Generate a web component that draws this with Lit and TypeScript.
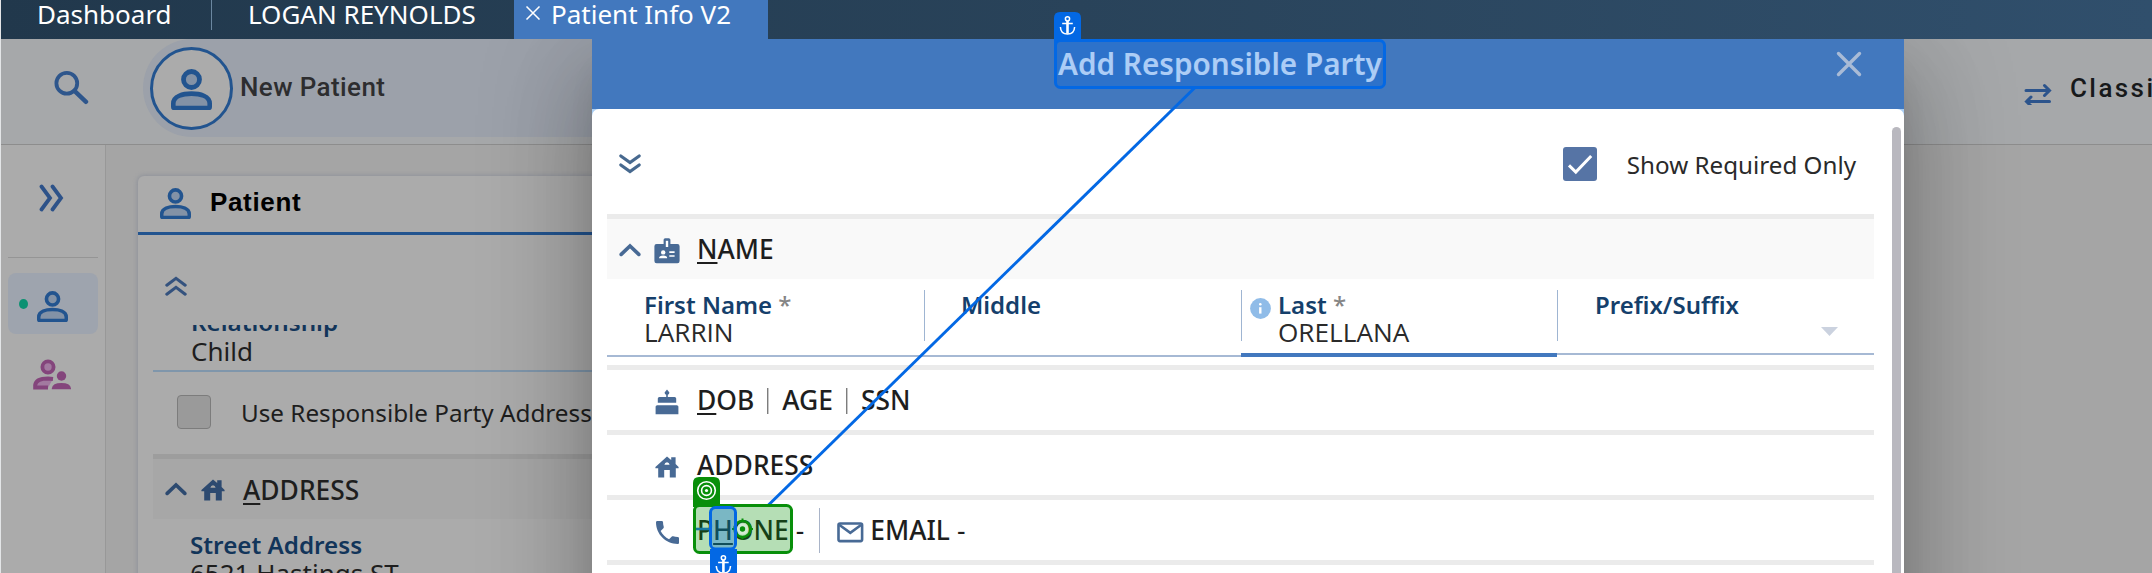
import { LitElement, html, svg, css, type TemplateResult } from "lit";
import { customElement, property } from "lit/decorators.js";
import { classMap } from "lit/directives/class-map.js";

const person = html`<svg viewBox="0 0 41 41" width="100%" height="100%">
  <path d="M2.3 38 V34.5 C2.3 27 12 24.6 20.5 24.6 S38.7 27 38.7 34.5 V38 Q38.7 39 37.5 39 H3.5 Q2.3 39 2.3 38Z" fill="#8392a6" stroke="currentColor" stroke-width="4.6"/>
  <circle cx="20.5" cy="10.5" r="8" fill="#8392a6" stroke="currentColor" stroke-width="4.8"/>
</svg>`;

const house = html`<svg viewBox="0 0 24 22" width="24" height="22" fill="currentColor">
  <path fill-rule="evenodd" d="M12 .5 L16.2 4 V1.2 H20.6 V8 L23.6 11 V12.3 H20.8 V21.5 H14.8 V14 H9.2 V21.5 H3.2 V12.3 H.4 V11Z M9.4 8.8 H14.6 Q14.2 6.3 12 6.3 T9.4 8.8Z"/>
</svg>`;

const chevronUp = html`<svg viewBox="0 0 22 14" width="22" height="14" fill="none" stroke="currentColor" stroke-width="3.6" stroke-linecap="round" stroke-linejoin="miter"><path d="M2.2 11.4 11 3 19.8 11.4"/></svg>`;

const anchor = svg`<g fill="none" stroke="#fff" stroke-width="1.5">
  <circle cx="8" cy="2.8" r="2.1"/><path d="M8 5V17.6" stroke-width="2.6"/><path d="M2.7 7.6H13.3M.9 11Q1.2 18 8 18T15.1 11"/></g>`;

const icons: Record<string, TemplateResult> = {
  badge: html`<svg viewBox="0 0 26 26" width="26" height="26"><path fill="#486a95" d="M9.6 1.8Q9.6.3 11.2.3H14.8Q16.4.3 16.4 1.8V6H23.4Q25.6 6 25.6 8.2V23Q25.6 25.2 23.4 25.2H2.6Q.4 25.2 .4 23V8.2Q.4 6 2.6 6H9.6Z"/><path d="M11.8 2.8H14.2V9H11.8Z" fill="#fff"/><circle cx="9.2" cy="14.4" r="2.2" fill="#fff"/><path d="M5 20.2Q5.2 17.4 9.2 17.4T13.2 20.2Z" fill="#fff"/><path d="M15.3 14.2H20.6M15.3 18H20.6" stroke="#fff" stroke-width="1.7"/></svg>`,
  cake: html`<svg viewBox="0 0 24 26" width="24" height="26" fill="currentColor"><path d="M12 .6 L14.4 3.4 Q14.4 5.4 12.8 5.8 V8H19.6Q21.2 8 21.2 9.6V13.8H2.8V9.6Q2.8 8 4.4 8H11.2V5.8Q9.6 5.4 9.6 3.4Z"/><path d="M2.2 16.2H21.8Q23.4 16.2 23.4 17.8V25.2H.6V17.8Q.6 16.2 2.2 16.2Z"/></svg>`,
  house,
  phone: html`<svg viewBox="3 3 18 18" width="23" height="23" fill="currentColor"><path d="M6.62 10.79c1.44 2.83 3.76 5.14 6.59 6.59l2.2-2.2c.27-.27.67-.36 1.02-.24 1.12.37 2.33.57 3.57.57.55 0 1 .45 1 1V20c0 .55-.45 1-1 1-9.39 0-17-7.61-17-17 0-.55.45-1 1-1h3.5c.55 0 1 .45 1 1 0 1.25.2 2.45.57 3.57.11.35.03.74-.25 1.02l-2.2 2.2z"/></svg>`,
};

@customElement("info-field")
class InfoField extends LitElement {
  @property() label = "";
  @property() value = "";
  @property({ type: Boolean }) required = false;
  @property({ type: Boolean, reflect: true }) active = false;
  @property({ type: Boolean, reflect: true }) select = false;
  static styles = css`
    :host { display: block; position: relative; box-sizing: border-box; height: 78px; padding: 11px 0 0 37px; border-bottom: 2px solid #a6b9d4; font-family: "Noto Sans", sans-serif; }
    :host([active]) { border-bottom: 4px solid #4278be; }
    :host([select]) { height: 76px; padding-left: 38px; }
    .label { font-weight: 600; font-size: 24px; line-height: 30px; color: #153f6b; white-space: nowrap; }
    .star { color: #858585; font-weight: 500; }
    .value { font-family: "Open Sans", "Noto Sans", sans-serif; font-size: 26.2px; line-height: 26px; margin-top: -1px; color: #2a2a2a; }
    .rule { position: absolute; left: 0; top: 11px; width: 1px; height: 51px; background: #9fb5d2; }
    .info { position: absolute; left: 9px; top: 19px; }
    .caret { position: absolute; right: 36px; top: 48px; }
    :host(.first) .rule { display: none; }
  `;
  render() {
    return html`<span class="rule"></span>
      ${this.active ? html`<svg class="info" width="21" height="21" viewBox="0 0 21 21"><circle cx="10.5" cy="10.5" r="10.4" fill="#90bce8"/><path d="M10.3 9.2V15.6" stroke="#fff" stroke-width="2.4"/><circle cx="10.3" cy="6.2" r="1.3" fill="#fff"/></svg>` : ""}
      <div class="label">${this.label}${this.required ? html` <span class="star">*</span>` : ""}</div>
      <div class="value">${this.value}</div>
      ${this.select ? html`<svg class="caret" width="17" height="9" viewBox="0 0 17 9"><path d="M0 0H17L8.5 9Z" fill="#cbd2df"/></svg>` : ""}`;
  }
}

@customElement("app-root")
class AppRoot extends LitElement {
  static styles = css`
    :host { display: block; width: 2152px; height: 573px; overflow: hidden; position: relative; background: #ababab; font-family: "Noto Sans", sans-serif; color: #1e1e1e; }
    * { box-sizing: border-box; }
    svg { display: block; }
    u { text-decoration: underline; text-decoration-thickness: 2px; text-underline-offset: 3px; text-decoration-skip-ink: none; }
    .page { display: flex; flex-direction: column; height: 573px; border-left: 1px solid #e3e5e7; overflow: hidden; }
    .tabs { flex: none; height: 39px; display: flex; background: linear-gradient(90deg, #21384c, #29435a 50%, #304f6c); color: #fff; font-size: 26px; line-height: 28px; white-space: nowrap; }
    .tab { width: 210px; padding-left: 36px; }
    .tab.patient { width: 303px; border-left: 1px solid #6b87a0; height: 30px; }
    .tab.active { width: 254px; background: #4278be; display: flex; padding-left: 11px; gap: 10px; }
    .tab.active svg { margin-top: 6px; }
    .header { flex: none; height: 106px; background: #a6a8aa; border-bottom: 1px solid #8d8d8d; display: flex; overflow: hidden; }
    .search { width: 142px; padding: 31px 0 0 52px; color: #2e568c; }
    .pill { height: 98px; width: 1200px; border-radius: 49px 0 0 49px; background: #9ca1aa; display: flex; align-items: center; }
    .avatar { width: 83px; height: 83px; margin: 0 0 0 7px; border: 3px solid #22548f; border-radius: 50%; background: #ababab; padding: 18px; color: #22548f; }
    .avatar .ic { display: block; width: 41px; height: 41px; margin-top: 1px; }
    .who { font: 500 26px/32px Roboto, sans-serif; letter-spacing: .4px; margin: -2px 0 0 7px; color: #2d2d2f; }
    .classic { margin-left: auto; width: 128px; display: flex; gap: 18px; font: 500 26px/32px Roboto, sans-serif; letter-spacing: 2.4px; white-space: nowrap; color: #17191b; padding-top: 33px; }
    .classic svg { margin-top: 11px; color: #2c548c; flex: none; }
    .main { flex: 1; display: flex; min-height: 0; }
    .rail { width: 105px; flex: none; border-right: 1px solid #989898; display: flex; flex-direction: column; }
    .expand { height: 113px; margin: 0 7px; border-bottom: 1px solid #959595; padding: 39px 0 0 31px; color: #2d5289; }
    .here { margin: 15px 7px 0; height: 61px; border-radius: 8px; background: #9ea4ae; display: flex; align-items: center; padding-left: 11px; gap: 9px; color: #22548f; }
    .dot { width: 9px; height: 10px; border-radius: 50%; background: #0b9172; }
    .here .ic { width: 31px; height: 31px; margin-top: 6px; }
    .family { padding: 24px 0 0 32px; }
    .content { flex: 1; background: #a5a5a5; padding: 31px 0 0 32px; }
    .card { width: 1300px; height: 500px; background: #ababab; border-radius: 6px; box-shadow: 0 0 4px 1px #8f929b; }
    .cardhead { height: 59px; display: flex; border-bottom: 3px solid #22548f; padding: 12px 0 0 22px; gap: 19px; color: #22548f; }
    .cardhead .ic { width: 31px; height: 31px; }
    .cardname { font: 700 26px/30px "Liberation Sans", sans-serif; letter-spacing: .65px; color: #000; margin-top: -1px; }
    .collapse { height: 90px; padding: 41px 0 0 27px; color: #34527e; }
    .scroll { margin-left: 15px; overflow: hidden; height: 250px; }
    .rel { height: 47px; border-bottom: 2px solid #7f96ab; padding: 0 0 5px 38px; display: flex; flex-direction: column; justify-content: flex-end; }
    .lab { font-weight: 600; font-size: 24.2px; line-height: 30px; color: #12355a; white-space: nowrap; }
    .val { font-size: 26px; line-height: 28px; white-space: nowrap; }
    .use { height: 82px; display: flex; padding: 23px 0 0 24px; gap: 30px; font-size: 24.25px; line-height: 35px; white-space: nowrap; }
    .box { width: 34px; height: 34px; border: 1px solid #7c7c7c; border-radius: 4px; background: #9a9a9a; flex: none; }
    .sec { height: 65px; border-top: 5px solid #9d9d9d; background: #a7a7a7; display: flex; padding: 0 0 0 12px; align-items: center; color: #2d4a70; }
    .sec .home { margin: 2px 0 0 14px; width: 24px; }
    .sec .t { margin: 2px 0 0 18px; }
    .t { font-size: 26.4px; font-weight: 500; line-height: 28px; color: #1e1e1e; white-space: nowrap; }
    .street { padding: 11px 0 0 37px; }
    .street .val { margin-top: -1px; }

    .clip { position: absolute; inset: 39px 0 0 0; overflow: hidden; }
    .modal { margin-left: 592px; width: 1312px; height: 700px; background: #a9cdf2; box-shadow: 0 24px 33px -15px rgba(0,0,0,.2), 0 53px 84px 7px rgba(0,0,0,.16), 0 20px 101px 18px rgba(0,0,0,.14); display: flex; flex-direction: column; }
    .mhead { height: 70px; flex: none; background: #4278be; display: grid; grid-template-columns: 466px 1fr auto; padding: 0 42px 0 0; color: #fff; font-size: 29.7px; font-weight: 600; line-height: 37px; }
    .title { grid-column: 2; padding-top: 6px; }
    .close { margin-top: 12px; }
    .mbody { flex: 1; background: #fff; border-radius: 7px 7px 0 0; display: flex; justify-content: space-between; padding: 0 3px 0 15px; }
    .bar { width: 9px; border-radius: 5px; background: #b9b8bf; margin-top: 18px; }
    .list { width: 1267px; }
    .tools { height: 105px; display: flex; padding: 38px 18px 0 12px; align-items: flex-start; font-size: 24.2px; line-height: 35px; color: #2a2a2a; }
    .dbl { margin: 7px auto 0 0; color: #47698f; }
    .check { width: 34px; height: 34px; border-radius: 3px; background: #5674a5; margin-right: 30px; }
    .row { height: 65px; border-top: 5px solid #ebebeb; display: flex; align-items: center; padding-left: 12px; color: #486a95; }
    .row.open { background: #f9f9f9; }
    .row .chev { width: 22px; margin-right: 13px; margin-top: 1px; }
    .row .ic { width: 26px; display: flex; justify-content: center; margin: 4px 17px 0 0; }
    .row .t { margin-top: -1px; display: flex; align-items: center; }
    .sep { width: 1px; height: 26px; background: #7d7d7d; box-shadow: 1px 0 #c8c8c8; margin: 3px 14px 0 13px; }
    .sep.tall { height: 45px; background: #a9b4c8; box-shadow: none; margin: 2px 17px 0 15px; }
    .mail { margin: 5px 6px 0 0; }
    .fields { display: grid; grid-template-columns: 317px 317px 316px 317px; height: 86px; align-items: start; }
    .dash { font-weight: 400; margin-left: 7px; }
    .overlay { position: absolute; left: 0; top: 0; pointer-events: none; }
  `;

  row(icon: string, title: TemplateResult, open = false) {
    return html`<div class=${classMap({ row: true, open })}><span class="chev">${open ? chevronUp : ""}</span><span class="ic">${icons[icon]}</span><span class="t">${title}</span></div>`;
  }

  render() {
    return html`
      <div class="page">
        <div class="tabs">
          <div class="tab">Dashboard</div>
          <div class="tab patient">LOGAN REYNOLDS</div>
          <div class="tab active"><svg width="16" height="14" viewBox="0 0 16 14"><path d="M1.5.5 14.5 13.5M14.5.5 1.5 13.5" stroke="#fff" stroke-width="1.5"/></svg>Patient Info V2</div>
        </div>
        <div class="header">
          <div class="search"><svg width="36" height="36" viewBox="0 0 36 36" fill="none" stroke="currentColor"><circle cx="13.8" cy="13.3" r="10.4" stroke-width="3.8"/><path d="M21.5 20.8 33 31.8" stroke-width="4.4" stroke-linecap="round"/></svg></div>
          <div class="pill"><div class="avatar"><span class="ic">${person}</span></div><span class="who">New Patient</span></div>
          <div class="classic"><svg width="28" height="22" viewBox="0 0 28 22" fill="none" stroke="currentColor" stroke-width="3" stroke-linecap="round"><path d="M2 7.5H25.5M20.5 2.5 25.5 7.5 20.5 12.5M25.5 18.5H2.5M7 14 2.5 18.5 7 23"/></svg>Classic</div>
        </div>
        <div class="main">
          <div class="rail">
            <div class="expand"><svg width="25" height="28" viewBox="0 0 25 28" fill="none" stroke="currentColor" stroke-width="3.8" stroke-linecap="round"><path d="M2.5 2.5 11 14 2.5 25.5M13.5 2.5 22 14 13.5 25.5"/></svg></div>
            <div class="here"><span class="dot"></span><span class="ic">${person}</span></div>
            <div class="family"><svg width="38" height="32" viewBox="0 0 38 32"><circle cx="15" cy="9" r="5.6" fill="#a27aa0" stroke="#84457c" stroke-width="3.8"/><path d="M15 29.4H2.2V27Q3 20.4 15 20.4L20 21" fill="#a27aa0" stroke="#84457c" stroke-width="4"/><circle cx="28.5" cy="18" r="4.7" fill="#84457c"/><path d="M18.8 31.2V30.4Q19.5 25 28.4 25T38 30.4V31.2Z" fill="#84457c"/></svg></div>
          </div>
          <div class="content">
            <div class="card">
              <div class="cardhead"><span class="ic">${person}</span><span class="cardname">Patient</span></div>
              <div class="collapse"><svg width="22" height="20" viewBox="0 0 22 20" fill="none" stroke="currentColor" stroke-width="3" stroke-linecap="round"><path d="M1.8 9.2 11 2.3 20.2 9.2M1.8 18.2 11 11.3 20.2 18.2"/></svg></div>
              <div class="scroll">
                <div class="rel"><div class="lab">Relationship</div><div class="val">Child</div></div>
                <div class="use"><span class="box"></span>Use Responsible Party Address</div>
                <div class="sec">${chevronUp}<span class="home">${house}</span><span class="t"><u>A</u>DDRESS</span></div>
                <div class="street"><div class="lab">Street Address</div><div class="val">6521 Hastings ST</div></div>
              </div>
            </div>
          </div>
        </div>
      </div>
      <div class="clip">
        <div class="modal">
          <div class="mhead"><span class="title">Add Responsible Party</span>
            <svg class="close" width="26" height="26" viewBox="0 0 26 26"><path d="M2.5 2.5 23.5 23.5M23.5 2.5 2.5 23.5" stroke="#a9bbd6" stroke-width="3.4" stroke-linecap="round"/></svg></div>
          <div class="mbody">
            <div class="list">
              <div class="tools"><svg class="dbl" width="22" height="20" viewBox="0 0 22 20" fill="none" stroke="currentColor" stroke-width="3.1" stroke-linecap="round"><path d="M1.8 2 11 8.6 20.2 2M1.8 11 11 17.6 20.2 11"/></svg>
                <span class="check"><svg width="34" height="34" viewBox="0 0 34 34"><path d="M6 18.4 12.8 25 28.2 9" fill="none" stroke="#fff" stroke-width="3"/></svg></span>Show Required Only</div>
              ${this.row("badge", html`<u>N</u>AME`, true)}
              <div class="fields">
                <info-field class="first" label="First Name" value="LARRIN" required></info-field>
                <info-field label="Middle"></info-field>
                <info-field label="Last" value="ORELLANA" required active></info-field>
                <info-field label="Prefix/Suffix" select></info-field>
              </div>
              ${this.row("cake", html`<u>D</u>OB<span class="sep"></span>AGE<span class="sep"></span>SSN`)}
              ${this.row("house", html`<u>A</u>DDRESS`)}
              ${this.row("phone", html`P<u>H</u>ONE<span class="dash">-</span><span class="sep tall"></span><svg class="mail" width="27" height="21" viewBox="0 0 27 21" fill="none" stroke="#486a95" stroke-width="2.6"><rect x="1.5" y="1.5" width="23.6" height="17.6" rx="1.5"/><path d="M2.5 3 13.3 10.8 24 3"/></svg>EMAIL<span class="dash">-</span>`)}
              <div class="row"></div>
            </div>
            <div class="bar"></div>
          </div>
        </div>
      </div>
      <svg class="overlay" width="2152" height="573" viewBox="0 0 2152 573">
        <path d="M1194.5 88 768.5 505" stroke="#0368e4" stroke-width="3"/>
        <rect x="1055.5" y="40.5" width="329" height="47" rx="5" fill="rgba(3,104,228,.33)" stroke="#0368e4" stroke-width="3"/>
        <path d="M1054 46V18Q1054 12 1060 12H1075Q1081 12 1081 18V40H1060Q1057 40 1054 46Z" fill="#0368e4"/>
        <g transform="translate(1059.5 16)">${anchor}</g>
        <rect x="694.5" y="505.5" width="97" height="47" rx="5" fill="rgba(10,145,10,.3)" stroke="#088f0a" stroke-width="3"/>
        <path d="M693 512V483Q693 477 699 477H714Q720 477 720 483V507H693Z" fill="#088f0a"/>
        <g fill="none" stroke="#fff" stroke-width="1.6"><circle cx="706.5" cy="490.5" r="8.8"/><circle cx="706.5" cy="490.5" r="4.9"/></g><circle cx="706.5" cy="490.5" r="1.6" fill="#fff"/>
        <path d="M696 529H710" stroke="#1878a0" stroke-width="2.6"/>
        <circle cx="742.5" cy="529" r="5.6" fill="#d3ebd3"/>
        <circle cx="742.5" cy="529" r="8" fill="none" stroke="#088f0a" stroke-width="2.6"/><circle cx="742.5" cy="529" r="2.7" fill="#088f0a"/>
        <path d="M732 529H735.5M749.5 529H753M742.5 518.5V522M742.5 536V539.5" stroke="#088f0a" stroke-width="2"/>
        <rect x="710.5" y="507.5" width="25" height="41.5" rx="5" fill="rgba(3,104,228,.33)" stroke="#0368e4" stroke-width="3"/>
        <path d="M710 549H737V573H710Z" fill="#0368e4"/>
        <g transform="translate(715.4 555)">${anchor}</g>
      </svg>`;
  }
}
